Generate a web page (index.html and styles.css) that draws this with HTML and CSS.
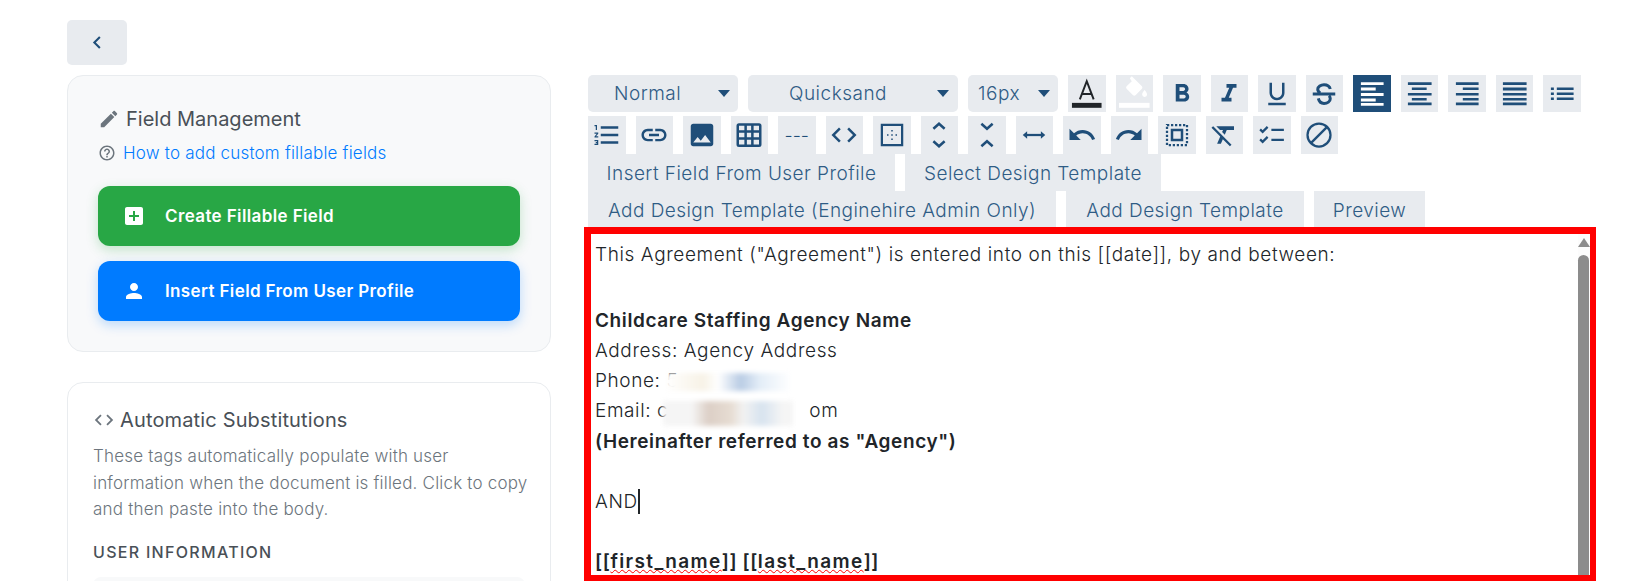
FILE: index.html
```html
<!DOCTYPE html>
<html lang="en">
<head>
<meta charset="utf-8">
<title>Document editor</title>
<link rel="stylesheet" href="styles.css">
</head>
<body>
<div class="page">
  <aside class="side">
    <button class="back"><svg viewBox="0 0 24 24" class="back-ic"><path d="M15 5l-7 7 7 7" fill="none" stroke="currentColor" stroke-width="2.600"/></svg></button>
    <section class="card card-grey">
      <h2 class="card-title"><svg viewBox="0 0 24 24" class="title-ic"><path d="M3 17.250V21h3.750L17.810 9.940l-3.750-3.750L3 17.250zM20.710 7.040c.39-.39.39-1.020 0-1.410l-2.340-2.340c-.39-.39-1.020-.39-1.410 0l-1.830 1.830 3.750 3.750 1.830-1.830z"/></svg>Field Management</h2>
      <p class="help"><svg viewBox="0 0 24 24" class="help-ic"><path d="M11 18h2v-2h-2v2zm1-16C6.480 2 2 6.480 2 12s4.480 10 10 10 10-4.480 10-10S17.520 2 12 2zm0 18c-4.410 0-8-3.590-8-8s3.590-8 8-8 8 3.590 8 8-3.590 8-8 8zm0-14c-2.210 0-4 1.790-4 4h2c0-1.100.9-2 2-2s2 .9 2 2c0 2-3 1.750-3 5h2c0-2.250 3-2.500 3-5 0-2.210-1.790-4-4-4z"/></svg><a class="help-link">How to add custom fillable fields</a></p>
      <button class="act act-green"><svg viewBox="0 0 24 24" class="act-ic"><path d="M19 3H5c-1.100 0-2 .9-2 2v14c0 1.100.9 2 2 2h14c1.100 0 2-.9 2-2V5c0-1.100-.9-2-2-2zm-2 10h-4v4h-2v-4H7v-2h4V7h2v4h4v2z"/></svg>Create Fillable Field</button>
      <button class="act act-blue"><svg viewBox="0 0 24 24" class="act-ic"><path d="M12 12c2.210 0 4-1.790 4-4s-1.790-4-4-4-4 1.790-4 4 1.790 4 4 4zm0 2c-2.670 0-8 1.340-8 4v2h16v-2c0-2.660-5.330-4-8-4z"/></svg>Insert Field From User Profile</button>
    </section>
    <section class="card card-white">
      <h2 class="card-title sub"><svg viewBox="0 0 24 24" class="code-ic"><path d="M9.400 16.600L4.800 12l4.600-4.600L8 6l-6 6 6 6 1.400-1.400zm5.200 0l4.600-4.600-4.600-4.600L16 6l6 6-6 6-1.400-1.400z"/></svg>Automatic Substitutions</h2>
      <p class="desc">These tags automatically populate with user information when the document is filled. Click to copy and then paste into the body.</p>
      <h3 class="eyebrow">USER INFORMATION</h3>
      <div class="tag-box"></div>
    </section>
  </aside>
  <main class="main">
    <div class="tb tb1">
      <div class="sel sel-a"><span>Normal</span><i class="caret"></i></div>
      <div class="sel sel-b"><span>Quicksand</span><i class="caret"></i></div>
      <div class="sel sel-c"><span>16px</span><i class="caret"></i></div>
      <button class="ib"><svg viewBox="0 0 38 37"><path d="M12 24.500L19 6l7 18.500M14.500 19h9" fill="none" stroke="#212529" stroke-width="2"/><rect x="4" y="28" width="30" height="5" fill="#212529"/></svg></button>
      <button class="ib"><svg viewBox="0 0 38 37"><path fill="#fff" d="M14 3l2-2 10 10c1 1 1 2 0 3l-6 6c-1 1-2 1-3 0l-6-6c-1-1-1-2 0-3l5-5zM29 15s2.500 2.800 2.500 4.500a2.500 2.500 0 0 1-5 0c0-1.700 2.500-4.500 2.500-4.500z"/><rect x="3" y="28" width="31" height="5" fill="#fff"/></svg></button>
      <button class="ib"><svg viewBox="0 0 24 24" class="ic"><path d="M15.600 10.790c.97-.67 1.650-1.770 1.650-2.790 0-2.260-1.750-4-4-4H7v14h7.040c2.090 0 3.710-1.700 3.710-3.790 0-1.520-.86-2.820-2.150-3.420zM10 6.500h3c.83 0 1.500.67 1.500 1.500s-.67 1.500-1.500 1.500h-3v-3zm3.500 9H10v-3h3.500c.83 0 1.500.67 1.500 1.500s-.67 1.500-1.500 1.500z"/></svg></button>
      <button class="ib"><svg viewBox="0 0 24 24" class="ic"><path d="M10 4v3h2.210l-3.420 8H6v3h8v-3h-2.210l3.420-8H18V4z"/></svg></button>
      <button class="ib"><svg viewBox="0 0 24 24" class="ic"><path d="M12 17c3.310 0 6-2.690 6-6V3h-2v8c0 2.200-1.800 4-4 4s-4-1.800-4-4V3H6v8c0 3.310 2.690 6 6 6zm-7 2v2h14v-2H5z"/></svg></button>
      <button class="ib"><svg viewBox="0 0 24 24" class="ic"><path d="M17 8c-.5-2-2.500-3.500-5-3.500S7 6 7 8.200c0 1.300.8 2.300 2 3M7.500 15.500C8 18 10 19.500 12 19.500c2.800 0 5-1.500 5-3.700 0-1-.4-1.800-1-2.400M3 12h18" fill="none" stroke="currentColor" stroke-width="2.400"/></svg></button>
      <button class="ib on"><svg viewBox="0 0 38 37" class="full"><path d="M8 7h23v3H8zM8 12.500h15v3H8zM8 18h23v3H8zM8 23.500h15v3H8zM8 28h23v3H8z" fill="#fff"/></svg></button>
      <button class="ib"><svg viewBox="0 0 38 37" class="full"><path d="M7 7h24v3H7zM11 12.500h15v2.500H11zM7 18h24v2.500H7zM11 23h15v2.500H11zM7 27.500h24v3H7z"/></svg></button>
      <button class="ib"><svg viewBox="0 0 38 37" class="full"><path d="M8 7h23v3H8zM15 12.500h16v2.500H15zM8 18h23v2.500H8zM15 23h16v2.500H15zM8 27.500h23v3H8z"/></svg></button>
      <button class="ib"><svg viewBox="0 0 38 37" class="full"><path d="M7 7h24v3H7zM7 12.500h24v3H7zM7 18h24v2.500H7zM7 23h24v2.500H7zM7 27.500h24v3H7z"/></svg></button>
      <button class="ib"><svg viewBox="0 0 38 37" class="full"><path d="M8 12.500h3v2.500H8zM14 12.500h17v2.500H14zM8 17.500h3v2.500H8zM14 17.500h17v2.500H14zM8 22.500h3v2.500H8zM14 22.500h17v2.500H14z"/></svg></button>
    </div>
    <div class="tb tb2">
      <button class="ib"><svg viewBox="0 0 24 24" class="ic"><path d="M2 17h2v.5H3v1h1v.5H2v1h3v-4H2zm1-9h1V4H2v1h1v3zm-1 3h1.800L2 13.100v.9h3v-1H3.200L5 10.900V10H2v1zm5-6v2h14V5H7zm0 14h14v-2H7v2zm0-6h14v-2H7v2z"/></svg></button>
      <button class="ib"><svg viewBox="0 0 24 24" class="ic"><path d="M3.900 12c0-1.710 1.390-3.100 3.100-3.100h4V7H7c-2.760 0-5 2.240-5 5s2.240 5 5 5h4v-1.900H7c-1.710 0-3.100-1.390-3.100-3.100zM8 13h8v-2H8v2zm9-6h-4v1.900h4c1.710 0 3.100 1.390 3.100 3.100s-1.390 3.100-3.100 3.100h-4V17h4c2.760 0 5-2.240 5-5s-2.240-5-5-5z"/></svg></button>
      <button class="ib"><svg viewBox="0 0 24 24" class="ic"><path d="M21 19V5c0-1.100-.9-2-2-2H5c-1.100 0-2 .9-2 2v14c0 1.100.9 2 2 2h14c1.100 0 2-.9 2-2zM8.500 13.500l2.500 3.010L14.500 12l4.500 6H5l3.500-4.500z"/></svg></button>
      <button class="ib"><svg viewBox="0 0 24 24" class="ic"><path d="M4 2.500h16a2 2 0 0 1 2 2v15a2 2 0 0 1-2 2H4a2 2 0 0 1-2-2v-15a2 2 0 0 1 2-2zm0 2v3.700h4.300V4.500zm6.300 0v3.700h3.400V4.500zm5.400 0v3.700H20V4.500zM4 10.200v3.600h4.300v-3.600zm6.300 0v3.600h3.400v-3.600zm5.400 0v3.600H20v-3.600zM4 15.800v3.700h4.300v-3.700zm6.300 0v3.700h3.400v-3.700zm5.400 0v3.700H20v-3.700z"/></svg></button>
      <button class="ib ib-text">---</button>
      <button class="ib"><svg viewBox="0 0 24 24" class="ic"><path d="M9.400 16.600L4.800 12l4.600-4.600L8 6l-6 6 6 6 1.400-1.400zm5.200 0l4.600-4.600-4.600-4.600L16 6l6 6-6 6-1.400-1.400z"/></svg></button>
      <button class="ib"><svg viewBox="0 0 24 24" class="ic"><path d="M3 3h18v18H3zm1.800 1.800v14.400h14.400V4.800zM11.400 8h1.200v1.200h-1.200zM11.400 11.400h1.200v1.200h-1.200zM8 11.400h1.200v1.200H8zM14.800 11.400H16v1.200h-1.200zM11.400 14.800h1.200V16h-1.200z" fill-rule="evenodd"/></svg></button>
      <button class="ib"><svg viewBox="0 0 24 24" class="ic"><path d="M7.500 7L12 3l4.500 4M7.500 17l4.500 4 4.500-4" fill="none" stroke="currentColor" stroke-width="2"/></svg></button>
      <button class="ib"><svg viewBox="0 0 24 24" class="ic"><path d="M7.500 3l4.500 4 4.500-4M7.500 21l4.500-4 4.500 4" fill="none" stroke="currentColor" stroke-width="2"/></svg></button>
      <button class="ib"><svg viewBox="0 0 24 24" class="ic"><path d="M5.500 12h13" fill="none" stroke="currentColor" stroke-width="1.800"/><path d="M6.500 9L3 12l3.500 3zM17.500 9l3.500 3-3.500 3z"/></svg></button>
      <button class="ib"><svg viewBox="0 0 24 24" class="ic"><path d="M12.500 8c-2.650 0-5.050.99-6.900 2.600L2 7v9h9l-3.620-3.620c1.390-1.160 3.160-1.880 5.120-1.880 3.540 0 6.550 2.310 7.600 5.500l2.370-.78C21.080 11.030 17.150 8 12.500 8z"/></svg></button>
      <button class="ib"><svg viewBox="0 0 24 24" class="ic"><path d="M18.400 10.600C16.550 8.990 14.150 8 11.500 8c-4.650 0-8.580 3.030-9.960 7.220L3.900 16c1.050-3.190 4.050-5.500 7.600-5.500 1.950 0 3.730.72 5.120 1.880L13 16h9V7l-3.600 3.600z"/></svg></button>
      <button class="ib"><svg viewBox="0 0 24 24" class="ic"><path d="M7 7h10v10H7zm2 2v6h6V9z" fill-rule="evenodd"/><path d="M4 4h16v16H4z" fill="none" stroke="currentColor" stroke-width="1.800" stroke-dasharray="1.800 1.400"/></svg></button>
      <button class="ib"><svg viewBox="0 0 24 24" class="ic"><path d="M3.270 5L2 6.270l6.970 6.970L6.500 19h3l1.570-3.660L16.730 21 18 19.730 3.550 5.270 3.270 5zM6 5v.18L8.820 8h2.400l-.72 1.680 2.100 2.100L14.210 8H20V5H6z"/></svg></button>
      <button class="ib"><svg viewBox="0 0 24 24" class="ic"><path d="M2.500 7.500l2 2 4-4M2.500 15.500l2 2 4-4" fill="none" stroke="currentColor" stroke-width="1.800"/><path d="M11.500 7h10v1.800h-10zM11.500 15h10v1.800h-10z"/></svg></button>
      <button class="ib"><svg viewBox="0 0 24 24" class="ic"><circle cx="12" cy="12" r="9.200" fill="none" stroke="currentColor" stroke-width="1.800"/><path d="M18.500 5.500l-13 13" fill="none" stroke="currentColor" stroke-width="1.800"/></svg></button>
    </div>
    <div class="tb tb-text">
      <button class="tbtn tw-a">Insert Field From User Profile</button>
      <button class="tbtn tw-b">Select Design Template</button>
    </div>
    <div class="tb tb-text">
      <button class="tbtn tw-c">Add Design Template (Enginehire Admin Only)</button>
      <button class="tbtn tw-d">Add Design Template</button>
      <button class="tbtn tw-e">Preview</button>
    </div>
    <div class="editor">
      <div class="doc">
        <p>This Agreement ("Agreement") is entered into on this [[date]], by and between:</p>
        <p>&nbsp;</p>
        <p><b>Childcare Staffing Agency Name</b></p>
        <p>Address: Agency Address</p>
        <p>Phone: 5</p>
        <p>Email: c<span class="email-end">om</span></p>
        <p><b>(Hereinafter referred to as "Agency")</b></p>
        <p>&nbsp;</p>
        <p><span class="cursor">AND</span></p>
        <p>&nbsp;</p>
        <p><b>[[<span class="typo">first_name</span>]] [[<span class="typo">last_name</span>]]</b></p>
      </div>
      <div class="blur blur-phone"></div>
      <div class="blur blur-email"></div>
      <div class="scroll"><i class="arrow"></i><i class="thumb"></i></div>
    </div>
  </main>
</div>
</body>
</html>
```
FILE: styles.css
```css
* { box-sizing: border-box; }
html, body { margin: 0; height: 100%; background: #fff; }
body { font-family: "Inter", "Lato", sans-serif; font-weight: 300; color: #212529; overflow: hidden; }
.page { display: flex; height: 581px; padding: 20px 51px 0 67px; gap: 33px; overflow: hidden; }
button { font: inherit; border: 0; padding: 0; margin: 0; }

.side { width: 484px; flex: none; }
.back { display: flex; align-items: center; justify-content: center; width: 60px; height: 45px; background: #e8ebef; border-radius: 5px; color: #1f4e79; }
.back-ic { width: 19px; height: 19px; }
.card { border: 1px solid #e9ecef; border-radius: 16px; }
.card-grey { margin-top: 10px; height: 277px; padding: 30px 30px 0; background: #f8f9fa; }
.card-white { margin-top: 30px; height: 300px; padding: 24px 25px 0; background: #fff; }
.card-title { display: flex; align-items: center; margin: 0; font-size: 20px; line-height: 26px; font-weight: 400; color: #495057; }
.title-ic { width: 22px; height: 22px; fill: #6c757d; margin-right: 6px; }
.help { display: flex; align-items: center; margin: 9px 0 0; height: 24px; }
.help-ic { width: 18px; height: 18px; fill: #6c757d; margin-right: 7px; }
.help-link { font-size: 17px; font-weight: 300; letter-spacing: .2px; color: #007bff; }
.act { display: flex; align-items: center; width: 422px; height: 60px; padding-left: 24px; margin-top: 15px; border-radius: 12px; color: #fff; font-size: 17px; font-weight: 600; letter-spacing: .38px; }
.act-green { margin-top: 21px; background: #28a745; box-shadow: 0 4px 12px rgba(40,167,69,.25); }
.act-blue { background: #007bff; box-shadow: 0 4px 12px rgba(0,123,255,.25); }
.act-ic { width: 24px; height: 24px; fill: #fff; margin-right: 19px; }
.sub { letter-spacing: .15px; }
.code-ic { width: 22px; height: 22px; fill: #6c757d; margin-right: 5px; }
.desc { margin: 10px -16px 0 0; font-size: 17px; line-height: 26.500px; letter-spacing: .2px; color: #6c757d; }
.eyebrow { margin: 18px 0 0; font-size: 16px; line-height: 22px; font-weight: 500; letter-spacing: 1.3px; color: #495057; }
.tag-box { margin-top: 14px; height: 60px; background: #f8f9fa; border-radius: 8px; }

.main { flex: 1; min-width: 0; padding-top: 55px; padding-left: 4px; display: flex; flex-direction: column; }
.tb { display: flex; gap: 10px; color: #1f4e79; }
.tb1 { height: 37px; }
.tb2 { height: 38px; margin-top: 4px; }
.tb-text { height: 37px; }
.sel { display: flex; align-items: center; height: 37px; background: #e8ebef; border-radius: 5px; font-size: 19px; letter-spacing: .5px; color: #2f5c85; }
.sel span { flex: 1; }
.sel-a { width: 150px; padding: 0 8px 0 26px; }
.sel-b { width: 210px; padding: 0 9px 0 41px; }
.sel-c { width: 90px; padding: 0 8px 0 10px; }
.caret { width: 0; height: 0; border: 6px solid transparent; border-top: 7px solid #1f4e79; border-bottom: 0; }
.ib { display: flex; align-items: center; justify-content: center; flex: none; width: 37.500px; height: 100%; background: #e8ebef; color: #1f4e79; }
.ib svg { width: 37.500px; height: 37px; }
.ib svg.ic { width: 30px; height: 30px; fill: currentColor; }
.ib svg.full { fill: currentColor; }
.ib.on { background: #1f4e79; }
.ib-text { font-size: 18px; }
.tbtn { flex: none; height: 37px; padding-top: 2px; background: #e8ebef; color: #2f5c85; font-size: 19px; letter-spacing: .45px; text-align: center; white-space: nowrap; }
.tw-a { width: 307px; }
.tw-b { width: 256px; }
.tw-c { width: 468px; }
.tw-d { width: 238px; }
.tw-e { width: 111px; }

.editor { position: relative; height: 354px; margin: -1px 0 0 -4px; width: 1012px; border: solid #f00; border-width: 7px 6px 6px 7px; background: #fff; overflow: hidden; }
.doc { padding: 6px 0 0 4px; font-size: 19px; line-height: 30.100px; letter-spacing: .6px; }
.doc p { margin: 0; height: 30.100px; white-space: nowrap; }
.doc p:nth-child(n+3) { position: relative; top: 6px; }
.doc b { font-weight: 600; }
.email-end { margin-left: 141px; }
.cursor { border-right: 2px solid #212529; display: inline-block; line-height: 25px; }
.typo { letter-spacing: 1.370px; text-decoration: underline wavy #f00 1px; text-underline-offset: 1px; text-decoration-skip-ink: none; }
.blur { position: absolute; background: #fff; filter: blur(2.500px); }
.blur-phone { left: 74px; top: 139px; width: 126px; height: 18px; background: linear-gradient(90deg, #fff, #f7f2e6 30%, #fff 42%, #b9cce4 60%, #e3edf7 75%, #fff); }
.blur-email { left: 72px; top: 167px; width: 130px; height: 25px; background: linear-gradient(90deg, #f5f5f5, #f5f5f5 22%, #dccfc6 35%, #e6dcd2 52%, #f2f2f2 62%, #d7e3ef 76%, #f5f5f5 92%); }
.scroll { position: absolute; right: 0; top: 0; bottom: 0; width: 12px; background: #fcfcfc; }
.arrow { position: absolute; left: 0; top: 4px; width: 0; height: 0; border: 6px solid transparent; border-bottom: 9px solid #8c8c8c; border-top: 0; }
.thumb { position: absolute; left: 0; top: 21px; bottom: -20px; width: 11px; background: #8c8c8c; border-radius: 6px 6px 0 0; }
```
